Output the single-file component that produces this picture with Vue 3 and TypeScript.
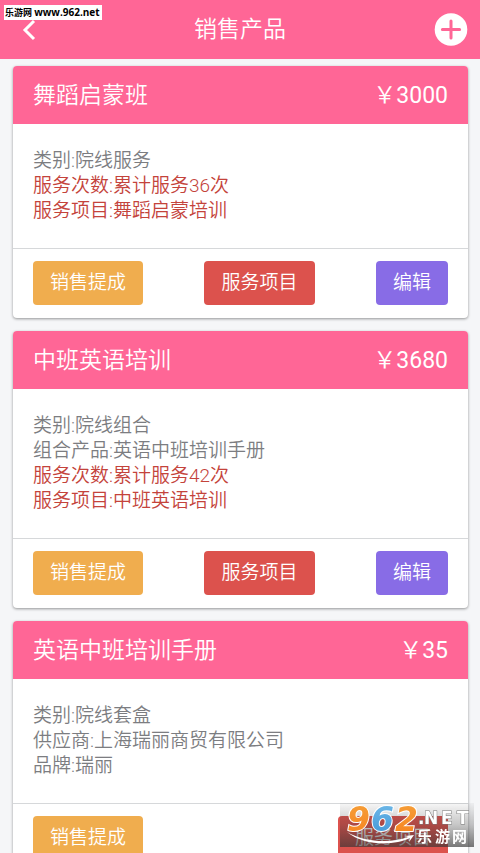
<script setup lang="ts">
interface Detail {
  label: string
  value: string
  accent?: boolean
}

interface Action {
  text: string
  tone: 'amber' | 'red' | 'violet'
}

interface Product {
  name: string
  price: number
  details: Detail[]
  actions: Action[]
}

const commission: Action = { text: '销售提成', tone: 'amber' }
const services: Action = { text: '服务项目', tone: 'red' }
const edit: Action = { text: '编辑', tone: 'violet' }

const products: Product[] = [
  {
    name: '舞蹈启蒙班',
    price: 3000,
    details: [
      { label: '类别', value: '院线服务' },
      { label: '服务次数', value: '累计服务36次', accent: true },
      { label: '服务项目', value: '舞蹈启蒙培训', accent: true },
    ],
    actions: [commission, services, edit],
  },
  {
    name: '中班英语培训',
    price: 3680,
    details: [
      { label: '类别', value: '院线组合' },
      { label: '组合产品', value: '英语中班培训手册' },
      { label: '服务次数', value: '累计服务42次', accent: true },
      { label: '服务项目', value: '中班英语培训', accent: true },
    ],
    actions: [commission, services, edit],
  },
  {
    name: '英语中班培训手册',
    price: 35,
    details: [
      { label: '类别', value: '院线套盒' },
      { label: '供应商', value: '上海瑞丽商贸有限公司' },
      { label: '品牌', value: '瑞丽' },
    ],
    actions: [commission, services],
  },
]
</script>

<template>
  <div class="screen">
    <header class="bar">
      <button class="icon-button back" type="button" aria-label="返回">
        <svg width="14" height="22" viewBox="0 0 14 22" fill="none">
          <path d="M12 2 3 11l9 9" stroke="#fff" stroke-width="3" />
        </svg>
      </button>
      <h1 class="title">销售产品</h1>
      <button class="icon-button add" type="button" aria-label="添加">
        <svg width="34" height="34" viewBox="0 0 34 34">
          <circle cx="17" cy="16.5" r="16.3" fill="#fff" />
          <path d="M17 7.9v17.2M8.4 16.5h17.2" stroke="#ff6696" stroke-width="3" stroke-linecap="round" />
        </svg>
      </button>
    </header>

    <main class="list">
      <article v-for="product in products" :key="product.name" class="card">
        <div class="card-head">
          <h2 class="name">{{ product.name }}</h2>
          <span class="price">￥<span class="amount">{{ product.price }}</span></span>
        </div>
        <div class="card-body">
          <p v-for="item in product.details" :key="item.label" class="detail" :class="{ accent: item.accent }">{{ item.label }}:{{ item.value }}</p>
        </div>
        <div class="card-foot">
          <button v-for="action in product.actions" :key="action.text" type="button" class="action" :class="action.tone">{{ action.text }}</button>
        </div>
      </article>
    </main>

    <div class="site-tag">乐游网 <span class="site-url">www.962.net</span></div>

    <svg class="stamp" width="134" height="44" viewBox="0 0 134 44">
      <defs>
        <linearGradient id="shade" x1="0" y1="0" x2="0" y2="1">
          <stop offset="0" stop-color="#333" stop-opacity="0.04" />
          <stop offset="0.5" stop-color="#333" stop-opacity="0.28" />
          <stop offset="1" stop-color="#333" stop-opacity="0.66" />
        </linearGradient>
        <linearGradient id="orange" x1="0" y1="0" x2="0" y2="1">
          <stop offset="0" stop-color="#f5a13a" />
          <stop offset="1" stop-color="#f7811f" />
        </linearGradient>
        <linearGradient id="blue" x1="0" y1="0" x2="0" y2="1">
          <stop offset="0" stop-color="#72bbe9" />
          <stop offset="1" stop-color="#3f94d6" />
        </linearGradient>
      </defs>
      <rect width="134" height="44" fill="url(#shade)" />
      <g class="digits">
        <text x="7" y="28" fill="url(#orange)">9</text>
        <text x="31" y="28" fill="url(#blue)">6</text>
        <text x="55" y="28" fill="url(#orange)">2</text>
      </g>
      <path d="M7 29C24 43 54 43 70 35l-1 4 5-7-9 1 3 1C52 40 26 40 7 29Z" fill="#fff" />
      <text class="net" x="78 84 101 117" y="21">.NET</text>
      <text class="cn" x="77 95 112" y="39">乐游网</text>
    </svg>
  </div>
</template>

<style>
body {
  margin: 0;
  background: #f5f6f8;
}
</style>

<style scoped>
.screen {
  display: flex;
  flex-direction: column;
  height: 100vh;
  overflow: hidden;
  background: #f5f6f8;
  font-family: Roboto, "Noto Sans CJK SC", sans-serif;
  font-weight: 350;
}

.bar {
  display: grid;
  grid-template-columns: 1fr auto 1fr;
  align-items: center;
  flex: none;
  height: 59px;
  padding: 0 12px 0 22px;
  box-sizing: border-box;
  background: #ff6696;
  color: #fff;
}

.title,
.name {
  margin: 0;
  font-size: 23px;
  font-weight: inherit;
  line-height: 32px;
}

.title {
  grid-column: 2;
  margin-right: 10px;
}

.icon-button {
  display: flex;
  padding: 0;
  border: 0;
  background: none;
  cursor: pointer;
}

.add {
  justify-self: end;
}

.list {
  display: flex;
  flex-direction: column;
  gap: 13px;
  flex: 1;
  min-height: 0;
  overflow-y: auto;
  padding: 7px 12px 13px 13px;
  scrollbar-width: none;
}

.card {
  flex: none;
  border-radius: 4px;
  background: #fff;
  box-shadow: 0 1px 3px rgba(0, 0, 0, 0.4);
  overflow: hidden;
}

.card-head {
  display: flex;
  justify-content: space-between;
  align-items: center;
  height: 58px;
  padding: 2px 20px 0;
  box-sizing: border-box;
  background: #ff6696;
  color: #fff;
}

.price {
  font-size: 23px;
  line-height: 32px;
}

.amount {
  font-weight: 400;
}

.card-body {
  padding: 24px 20px 25px;
}

.detail {
  margin: 0;
  font-size: 19px;
  line-height: 25px;
  color: #7c7d81;
}

.accent {
  color: #c4433b;
}

.card-foot {
  display: flex;
  justify-content: space-between;
  padding: 12px 20px 13px;
  border-top: 1px solid #d6d8da;
}

.action {
  height: 44px;
  padding: 0 17px 5px;
  border: 0;
  border-radius: 4px;
  color: #fff;
  font-family: inherit;
  font-size: 19px;
  font-weight: inherit;
  cursor: pointer;
}

.amber {
  background: #f0ad4e;
}

.red {
  background: #dc524d;
}

.violet {
  background: #886ce6;
}

.site-tag {
  position: fixed;
  top: 5px;
  left: 4px;
  padding: 0 2px 0 1px;
  background: #fff;
  color: #000;
  font-size: 9px;
  font-weight: 700;
  line-height: 14px;
  white-space: nowrap;
}

.site-url {
  font-family: "Open Sans", sans-serif;
  font-size: 10px;
}

.stamp {
  position: fixed;
  right: 6px;
  bottom: 6px;
  overflow: visible;
}

.digits {
  font-family: "DejaVu Sans", sans-serif;
  font-size: 33px;
  font-weight: 700;
  font-style: italic;
  stroke: #fff;
  stroke-width: 2px;
  paint-order: stroke;
}

.net {
  font-family: "DejaVu Sans", sans-serif;
  font-size: 17px;
  font-weight: 700;
  fill: #fff;
  stroke: #777;
  stroke-width: 1px;
  paint-order: stroke;
}

.cn {
  font-size: 15px;
  font-weight: 700;
  fill: #fff;
}
</style>
